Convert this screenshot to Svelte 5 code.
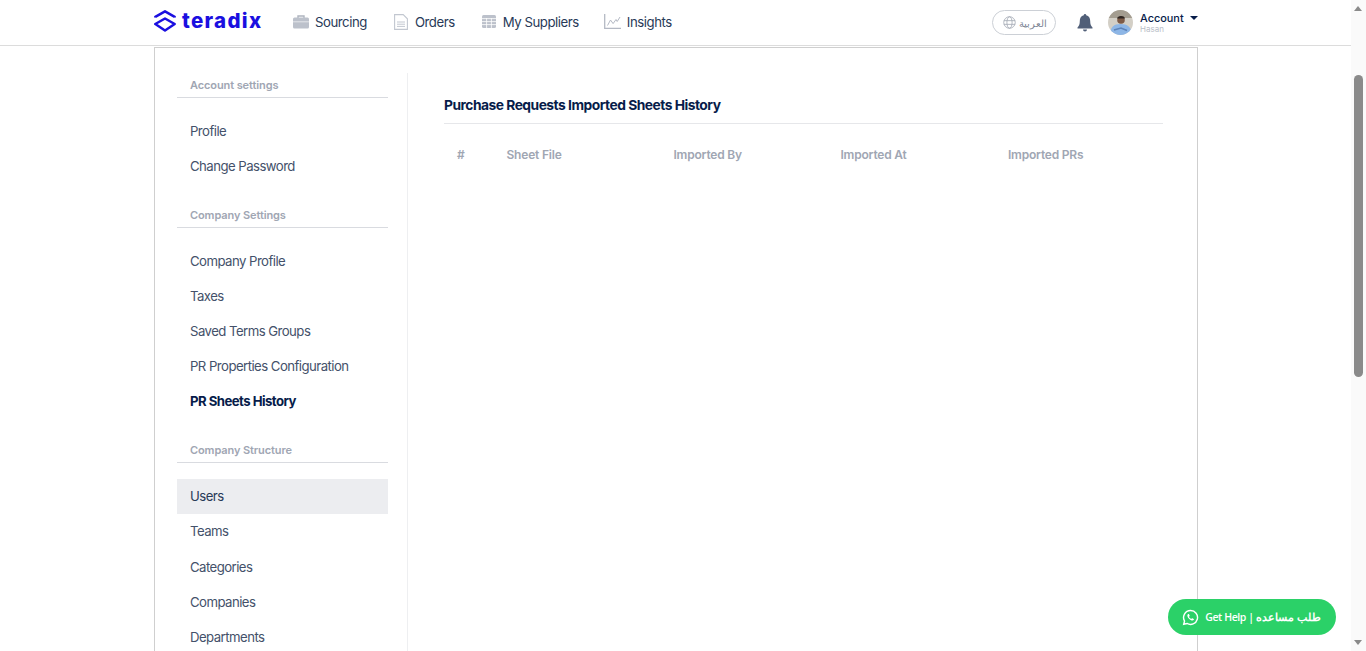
<script>
  const sections = [
    { title: 'Account settings', items: ['Profile', 'Change Password'] },
    { title: 'Company Settings', items: ['Company Profile', 'Taxes', 'Saved Terms Groups', 'PR Properties Configuration', 'PR Sheets History'] },
    { title: 'Company Structure', items: ['Users', 'Teams', 'Categories', 'Companies', 'Departments'] }
  ];
  const columns = ['#', 'Sheet File', 'Imported By', 'Imported At', 'Imported PRs'];
</script>

<div class="page">
  <header class="topbar">
    <div class="brand">
      <svg class="mark" viewBox="0 0 22 22" width="22" height="22" aria-hidden="true">
        <path d="M1.300 7.600V6.800L11 1.300l9.700 5.500v.8" fill="none" stroke="#1a0fe0" stroke-width="2.500" stroke-linejoin="round"/>
        <path d="M11 8.500 20.700 14 11 20.500 1.300 14z" fill="none" stroke="#1a0fe0" stroke-width="2.500" stroke-linejoin="round"/>
      </svg>
      <span class="wordmark">teradix</span>
    </div>
    <nav class="nav">
      <a class="nav-item">
        <svg viewBox="0 0 16 14" width="16" height="14" aria-hidden="true">
          <path d="M5 3V1h6v2" fill="none" stroke="#aeb4bf" stroke-width="1.400"/>
          <rect x="0" y="2.500" width="16" height="11" rx="1.500" fill="#bcc1cb"/>
          <path d="M0 6.800h16" stroke="#e4e6ea" stroke-width="1"/>
        </svg>
        <span>Sourcing</span>
      </a>
      <a class="nav-item">
        <svg viewBox="0 0 14 16" width="14" height="16" aria-hidden="true">
          <path d="M.6.600h8.600l4.200 4.200v10.600H.6z" fill="#fff" stroke="#c2c7d0" stroke-width="1.100"/>
          <path d="M3 8h8M3 10.200h8M3 12.400h8" stroke="#c2c7d0" stroke-width="1"/>
        </svg>
        <span>Orders</span>
      </a>
      <a class="nav-item">
        <svg viewBox="0 0 14 13" width="14" height="13" aria-hidden="true">
          <rect width="14" height="13" rx="1.500" fill="#bcc1cb"/>
          <path d="M0 3.600h14M0 6.600h14M0 9.600h14M4.600 3v10M9.400 3v10" stroke="#fff" stroke-width=".8"/>
        </svg>
        <span>My Suppliers</span>
      </a>
      <a class="nav-item">
        <svg viewBox="0 0 17 15" width="17" height="15" aria-hidden="true">
          <path d="M.7 0v14.300H17" fill="none" stroke="#b4b9c4" stroke-width="1.300"/>
          <path d="M3.500 11.500 6.500 6l2.600 3.600L12 5.500l1.200 2L16 3" fill="none" stroke="#b4b9c4" stroke-width="1"/>
        </svg>
        <span>Insights</span>
      </a>
    </nav>
    <div class="tools">
      <button class="lang">
        <svg viewBox="0 0 14 14" width="13" height="13" aria-hidden="true">
          <g fill="none" stroke="#a3a9b5" stroke-width=".9">
            <circle cx="7" cy="7" r="6.200"/>
            <ellipse cx="7" cy="7" rx="2.800" ry="6.200"/>
            <path d="M1 5h12M1 9h12"/>
          </g>
        </svg>
        <span>العربية</span>
      </button>
      <svg class="bell" viewBox="0 0 16 18" width="16" height="18" aria-hidden="true">
        <path d="M8 0a1.200 1.200 0 0 1 1.200 1.300C12 2 13.200 4.200 13.200 7c0 3.600.8 5 2.300 6.500V14.500H.5V13.500C2 12 2.800 10.600 2.800 7 2.800 4.200 4 2 6.800 1.300A1.200 1.200 0 0 1 8 0zM6 15.500h4a2 2 0 0 1-4 0z" fill="#515f78"/>
      </svg>
      <svg class="avatar" viewBox="0 0 25 25" width="25" height="25" aria-hidden="true">
        <defs><clipPath id="av"><circle cx="12.500" cy="12.500" r="12.500"/></clipPath></defs>
        <g clip-path="url(#av)">
          <rect width="25" height="25" fill="#d3cfc6"/>
          <rect width="25" height="8" fill="#a49d90"/>
          <path d="M2 25c0-8 4-11 10.500-11S24 17 24 25z" fill="#8db6e6"/>
          <path d="M6 20 13 18l6 2.500" stroke="#5d83b8" stroke-width="1.500" fill="none"/>
          <circle cx="13" cy="10" r="3.800" fill="#7d5a46"/>
          <path d="M9 8.500c.5-3 7-3.500 8 0z" fill="#2e2622"/>
        </g>
      </svg>
      <div class="account">
        <div class="account-top"><span>Account</span><i class="caret"></i></div>
        <div class="account-name">Hasan</div>
      </div>
    </div>
  </header>

  <main class="card">
    <aside class="side">
      {#each sections as s}
        <section class="group">
          <h4>{s.title}</h4>
          <ul>
            {#each s.items as item}
              <li class:active={item === 'PR Sheets History'} class:hover={item === 'Users'}>{item}</li>
            {/each}
          </ul>
        </section>
      {/each}
    </aside>
    <div class="content">
      <h2>Purchase Requests Imported Sheets History</h2>
      <div class="thead">
        {#each columns as c}<span>{c}</span>{/each}
      </div>
    </div>
  </main>
</div>

<div class="scrollbar" aria-hidden="true">
  <i class="arrow up"></i>
  <div class="thumb"></div>
  <i class="arrow down"></i>
</div>

<button class="help">
  <svg viewBox="0 0 24 24" width="17" height="17" aria-hidden="true">
    <path d="M12 2.200a9.800 9.800 0 0 0-8.400 14.800L2.400 21.600l4.700-1.200A9.800 9.800 0 1 0 12 2.200z" fill="none" stroke="#fff" stroke-width="2"/>
    <path d="M8.600 7.200c-.8.600-1.300 1.700-.9 3 .8 2.700 3.200 5.100 5.900 6 1.400.4 2.500-.1 3.100-1 .3-.4.200-.9-.2-1.100l-1.800-1c-.3-.2-.7-.1-1 .2l-.7.800c-1.300-.5-2.600-1.800-3.200-3.100l.8-.7c.3-.3.400-.7.200-1l-.9-1.900c-.2-.4-.8-.5-1.300-.2z" fill="#fff"/>
  </svg>
  <span>Get Help | طلب مساعده</span>
</button>

<style>
  :global(body) {
    margin: 0;
    background: #fff;
    font-family: Inter, "Noto Sans", sans-serif;
    overflow: hidden;
  }
  .page {
    height: 651px;
    overflow: hidden;
    padding-right: 15px;
    box-sizing: border-box;
  }
  .topbar {
    height: 46px;
    box-sizing: border-box;
    border-bottom: 1px solid #dcdcdc;
    padding: 0 153px 0 154px;
    display: flex;
    align-items: center;
  }
  .brand {
    display: flex;
    align-items: center;
    gap: 6px;
    width: 139px;
    margin-bottom: 3px;
  }
  .wordmark {
    font-family: Inter, sans-serif;
    font-weight: 800;
    font-size: 20.500px;
    letter-spacing: 1.300px;
    color: #1a0fe0;
    line-height: 1;
  }
  .nav {
    display: flex;
    align-items: center;
    gap: 27px;
    margin-bottom: 2px;
  }
  .nav-item {
    display: flex;
    align-items: center;
    gap: 7px;
    font-size: 13.200px;
    letter-spacing: -.45px;
    color: #283a58;
  }
  .nav-item:first-child { gap: 6px; }
  .nav-item:last-child { gap: 6px; margin-left: -2px; }
  .tools {
    margin-left: auto;
    display: flex;
    align-items: center;
  }
  .lang {
    width: 64px;
    height: 25px;
    box-sizing: border-box;
    border: 1px solid #ccd0d6;
    border-radius: 13px;
    background: #fff;
    padding: 0 0 0 1px;
    display: flex;
    align-items: center;
    justify-content: center;
    gap: 3px;
    font-family: "Noto Sans", sans-serif;
    font-size: 10px;
    color: #7d8595;
  }
  .bell { margin-left: 21px; }
  .avatar { margin-left: 15px; }
  .account {
    margin-left: 7px;
    width: 58px;
    margin-top: 1px;
  }
  .account-top {
    display: flex;
    align-items: center;
    gap: 6.500px;
    font-size: 10.900px;
    font-weight: 500;
    color: #071c4a;
    line-height: 13px;
  }
  .caret {
    width: 0;
    height: 0;
    border-left: 4px solid transparent;
    border-right: 4px solid transparent;
    border-top: 4px solid #071c4a;
    margin-bottom: 2px;
  }
  .account-name {
    font-size: 8px;
    color: #b9bec8;
    line-height: 9px;
  }
  .card {
    width: 1044px;
    height: 640px;
    margin: 1px 0 0 154px;
    box-sizing: border-box;
    border: 1px solid #cfcfcf;
    padding-top: 25px;
    display: flex;
    align-items: flex-start;
  }
  .side {
    width: 253px;
    box-sizing: border-box;
    padding: 0 19px 0 22px;
    height: 640px;
    border-right: 1px solid #eeeff1;
  }
  .group { margin-bottom: 19px; }
  .group h4 {
    margin: 0 0 16px;
    padding: 0 13px;
    height: 24px;
    line-height: 24px;
    border-bottom: 1px solid #d9dbe0;
    font-size: 11px;
    font-weight: 600;
    letter-spacing: -.1px;
    color: #a0a6b3;
  }
  .group ul { margin: 0; padding: 0; list-style: none; }
  .group li {
    height: 35px;
    line-height: 35px;
    padding: 0 13px;
    font-size: 13.200px;
    letter-spacing: -.55px;
    color: #44516a;
  }
  .group:last-child li { height: 35.300px; }
  .group li.active {
    font-weight: 700;
    color: #071c4a;
  }
  .group li.hover {
    background: #ecedf0;
    color: #283a58;
  }
  .content {
    margin-left: 36px;
    width: 719px;
  }
  .content h2 {
    margin: 0;
    padding-top: 24px;
    height: 26px;
    line-height: 17px;
    font-size: 13.800px;
    font-weight: 700;
    letter-spacing: -.5px;
    color: #071c4a;
    border-bottom: 1px solid #e6e7ea;
  }
  .thead {
    display: grid;
    grid-template-columns: 49.500px 167px 167px 167.500px 1fr;
    padding: 23px 0 0 13px;
    font-size: 12px;
    font-weight: 600;
    letter-spacing: -.2px;
    line-height: 15px;
    color: #a0a6b3;
  }
  .scrollbar {
    position: fixed;
    top: 0;
    right: 0;
    width: 15px;
    height: 651px;
    background: #fafafa;
  }
  .thumb {
    position: absolute;
    top: 75px;
    left: 3px;
    width: 9px;
    height: 302px;
    border-radius: 5px;
    background: #8a8a8a;
  }
  .arrow {
    position: absolute;
    left: 3px;
    width: 0;
    height: 0;
    border-left: 4.500px solid transparent;
    border-right: 4.500px solid transparent;
  }
  .arrow.up { top: 6px; border-bottom: 5px solid #8a8a8a; }
  .arrow.down { bottom: 6px; border-top: 5px solid #8a8a8a; }
  .help {
    position: fixed;
    left: 1168px;
    top: 599px;
    width: 168px;
    height: 36px;
    border: 0;
    border-radius: 18px;
    background: #2bd168;
    color: #fff;
    display: flex;
    align-items: center;
    justify-content: center;
    gap: 6px;
    padding: 0 1px 0 0;
    font-family: "Open Sans", "Noto Sans", sans-serif;
    font-size: 10.500px;
    font-weight: 600;
    letter-spacing: -.4px;
  }
</style>
